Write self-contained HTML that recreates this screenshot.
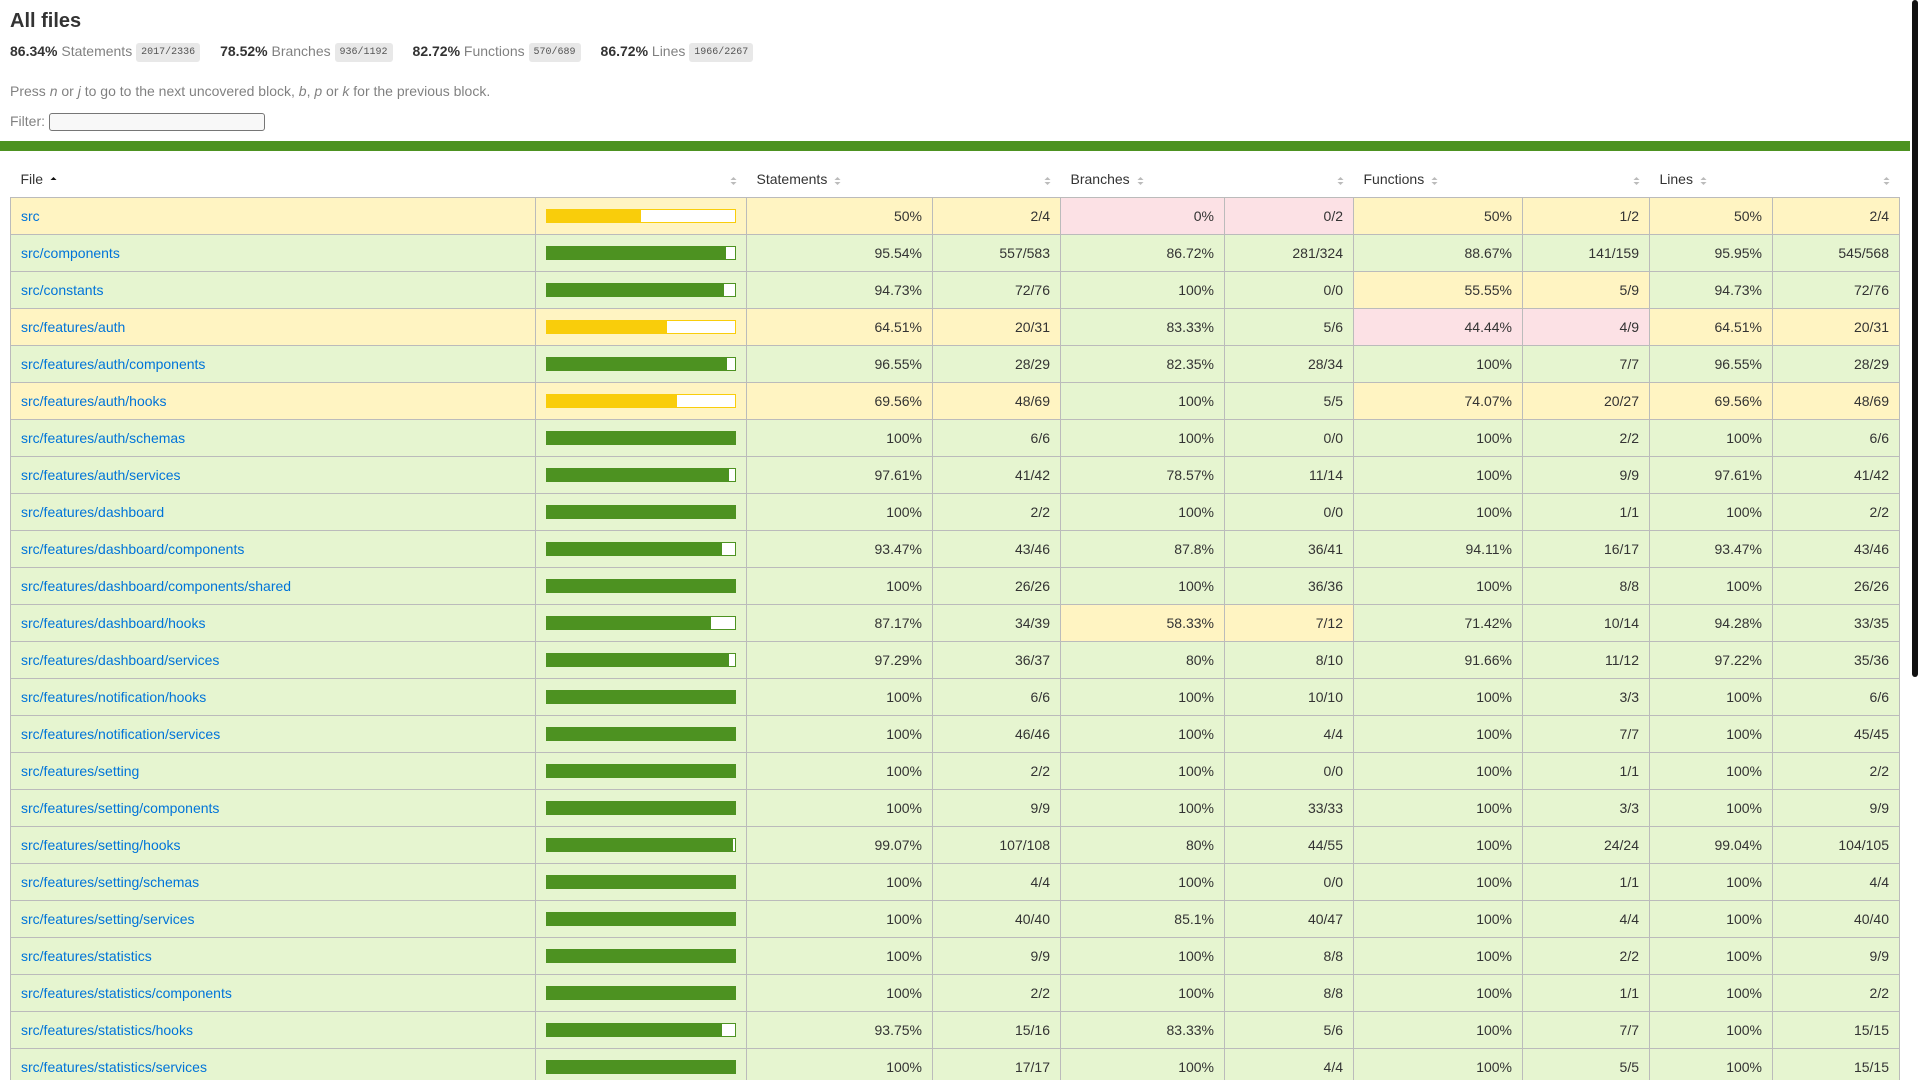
<!DOCTYPE html>
<html><head><meta charset="utf-8"><style>
html,body{margin:0;padding:0;overflow:hidden;height:1080px}
body{width:1910px;font-family:"Liberation Sans",Arial,sans-serif;font-size:14px;color:#333;background:#fff}
.pad1{padding:10px}
h1{font-size:20px;margin:0;line-height:23px}
.clearfix:after{content:"";display:table;clear:both}
.fl{float:left}
.pad1y{padding:10px 0}
.space-right2{padding-right:20px}
.strong{font-weight:bold}
.quiet{color:rgba(0,0,0,0.5)}
p{margin:14px 0;line-height:16px}
.fraction{font-family:"Liberation Mono",monospace;font-size:10px;color:#555;background:#E8E8E8;padding:4px 5px;border-radius:3px;vertical-align:middle}
input{width:216px;height:18px;border:1px solid #767676;border-radius:3px;padding:1px 2px;vertical-align:middle;background:#f8f8f8;margin:0}
.status-line{height:10px;background:rgb(77,146,33)}
table{border-collapse:collapse;width:1889px;table-layout:fixed}
tr{border-bottom:1px solid #bbb}
td,th{padding:10px;line-height:16px}
tbody{border:1px solid #bbb}
td{border-right:1px solid #bbb}
td:last-child{border-right:none}
th{text-align:left;font-weight:normal;white-space:nowrap}
th.pic,th.abs,td.pct,td.abs{text-align:right}
td.file{white-space:nowrap;overflow:hidden}
a{color:#0074D9;text-decoration:none}
.low{background:#FCE1E5}.medium{background:#fff4c2}.high{background:rgb(230,245,208)}
.chart{line-height:0;border:1px solid rgb(77,146,33);height:12px}
.medium .chart{border-color:#f9cd0b}
.high .cover-fill{background:rgb(77,146,33)}
.medium .cover-fill{background:#f9cd0b}
.cover-fill,.cover-empty{display:inline-block;height:12px;vertical-align:top}
.cover-empty{background:#fff}
.s{display:inline-block;width:7px;height:10px;margin-left:7px;vertical-align:middle}
.sb{position:absolute;right:2px;top:0;width:6px;height:677px;background:#111;border-radius:3px}
</style></head><body>
<div class="sb"></div>
<div class="pad1">
<h1>All files</h1>
<div class="clearfix">
<div class="fl pad1y space-right2"><span class="strong">86.34% </span><span class="quiet">Statements</span> <span class="fraction">2017/2336</span></div>
<div class="fl pad1y space-right2"><span class="strong">78.52% </span><span class="quiet">Branches</span> <span class="fraction">936/1192</span></div>
<div class="fl pad1y space-right2"><span class="strong">82.72% </span><span class="quiet">Functions</span> <span class="fraction">570/689</span></div>
<div class="fl pad1y space-right2"><span class="strong">86.72% </span><span class="quiet">Lines</span> <span class="fraction">1966/2267</span></div>
</div>
<p class="quiet">Press <em>n</em> or <em>j</em> to go to the next uncovered block, <em>b</em>, <em>p</em> or <em>k</em> for the previous block.</p>
<div class="quiet">Filter: <input type="search"></div>
</div>
<div class="status-line"></div>
<div class="pad1">
<table>
<colgroup><col style="width:525px"><col style="width:211px"><col style="width:186px"><col style="width:128px"><col style="width:164px"><col style="width:129px"><col style="width:169px"><col style="width:127px"><col style="width:123px"><col style="width:127px"></colgroup>
<thead><tr style="border:none">
<th>File<svg class="s" viewBox="0 0 7 10"><polygon points="0.5,4 6.5,4 3.5,1" fill="#111"/></svg></th>
<th class="pic"><svg class="s" viewBox="0 0 7 10"><polygon points="0.5,4 6.5,4 3.5,1" fill="#bbb"/><polygon points="0.5,6 6.5,6 3.5,9" fill="#bbb"/></svg></th>
<th>Statements<svg class="s" viewBox="0 0 7 10"><polygon points="0.5,4 6.5,4 3.5,1" fill="#bbb"/><polygon points="0.5,6 6.5,6 3.5,9" fill="#bbb"/></svg></th>
<th class="abs"><svg class="s" viewBox="0 0 7 10"><polygon points="0.5,4 6.5,4 3.5,1" fill="#bbb"/><polygon points="0.5,6 6.5,6 3.5,9" fill="#bbb"/></svg></th>
<th>Branches<svg class="s" viewBox="0 0 7 10"><polygon points="0.5,4 6.5,4 3.5,1" fill="#bbb"/><polygon points="0.5,6 6.5,6 3.5,9" fill="#bbb"/></svg></th>
<th class="abs"><svg class="s" viewBox="0 0 7 10"><polygon points="0.5,4 6.5,4 3.5,1" fill="#bbb"/><polygon points="0.5,6 6.5,6 3.5,9" fill="#bbb"/></svg></th>
<th>Functions<svg class="s" viewBox="0 0 7 10"><polygon points="0.5,4 6.5,4 3.5,1" fill="#bbb"/><polygon points="0.5,6 6.5,6 3.5,9" fill="#bbb"/></svg></th>
<th class="abs"><svg class="s" viewBox="0 0 7 10"><polygon points="0.5,4 6.5,4 3.5,1" fill="#bbb"/><polygon points="0.5,6 6.5,6 3.5,9" fill="#bbb"/></svg></th>
<th>Lines<svg class="s" viewBox="0 0 7 10"><polygon points="0.5,4 6.5,4 3.5,1" fill="#bbb"/><polygon points="0.5,6 6.5,6 3.5,9" fill="#bbb"/></svg></th>
<th class="abs"><svg class="s" viewBox="0 0 7 10"><polygon points="0.5,4 6.5,4 3.5,1" fill="#bbb"/><polygon points="0.5,6 6.5,6 3.5,9" fill="#bbb"/></svg></th>
</tr></thead>
<tbody>
<tr><td class="file medium"><a>src</a></td><td class="pic medium"><div class="chart"><div class="cover-fill" style="width:50%"></div><div class="cover-empty" style="width:50%"></div></div></td><td class="pct medium">50%</td><td class="abs medium">2/4</td><td class="pct low">0%</td><td class="abs low">0/2</td><td class="pct medium">50%</td><td class="abs medium">1/2</td><td class="pct medium">50%</td><td class="abs medium">2/4</td></tr>
<tr><td class="file high"><a>src/components</a></td><td class="pic high"><div class="chart"><div class="cover-fill" style="width:95%"></div><div class="cover-empty" style="width:5%"></div></div></td><td class="pct high">95.54%</td><td class="abs high">557/583</td><td class="pct high">86.72%</td><td class="abs high">281/324</td><td class="pct high">88.67%</td><td class="abs high">141/159</td><td class="pct high">95.95%</td><td class="abs high">545/568</td></tr>
<tr><td class="file high"><a>src/constants</a></td><td class="pic high"><div class="chart"><div class="cover-fill" style="width:94%"></div><div class="cover-empty" style="width:6%"></div></div></td><td class="pct high">94.73%</td><td class="abs high">72/76</td><td class="pct high">100%</td><td class="abs high">0/0</td><td class="pct medium">55.55%</td><td class="abs medium">5/9</td><td class="pct high">94.73%</td><td class="abs high">72/76</td></tr>
<tr><td class="file medium"><a>src/features/auth</a></td><td class="pic medium"><div class="chart"><div class="cover-fill" style="width:64%"></div><div class="cover-empty" style="width:36%"></div></div></td><td class="pct medium">64.51%</td><td class="abs medium">20/31</td><td class="pct high">83.33%</td><td class="abs high">5/6</td><td class="pct low">44.44%</td><td class="abs low">4/9</td><td class="pct medium">64.51%</td><td class="abs medium">20/31</td></tr>
<tr><td class="file high"><a>src/features/auth/components</a></td><td class="pic high"><div class="chart"><div class="cover-fill" style="width:96%"></div><div class="cover-empty" style="width:4%"></div></div></td><td class="pct high">96.55%</td><td class="abs high">28/29</td><td class="pct high">82.35%</td><td class="abs high">28/34</td><td class="pct high">100%</td><td class="abs high">7/7</td><td class="pct high">96.55%</td><td class="abs high">28/29</td></tr>
<tr><td class="file medium"><a>src/features/auth/hooks</a></td><td class="pic medium"><div class="chart"><div class="cover-fill" style="width:69%"></div><div class="cover-empty" style="width:31%"></div></div></td><td class="pct medium">69.56%</td><td class="abs medium">48/69</td><td class="pct high">100%</td><td class="abs high">5/5</td><td class="pct medium">74.07%</td><td class="abs medium">20/27</td><td class="pct medium">69.56%</td><td class="abs medium">48/69</td></tr>
<tr><td class="file high"><a>src/features/auth/schemas</a></td><td class="pic high"><div class="chart"><div class="cover-fill" style="width:100%"></div></div></td><td class="pct high">100%</td><td class="abs high">6/6</td><td class="pct high">100%</td><td class="abs high">0/0</td><td class="pct high">100%</td><td class="abs high">2/2</td><td class="pct high">100%</td><td class="abs high">6/6</td></tr>
<tr><td class="file high"><a>src/features/auth/services</a></td><td class="pic high"><div class="chart"><div class="cover-fill" style="width:97%"></div><div class="cover-empty" style="width:3%"></div></div></td><td class="pct high">97.61%</td><td class="abs high">41/42</td><td class="pct high">78.57%</td><td class="abs high">11/14</td><td class="pct high">100%</td><td class="abs high">9/9</td><td class="pct high">97.61%</td><td class="abs high">41/42</td></tr>
<tr><td class="file high"><a>src/features/dashboard</a></td><td class="pic high"><div class="chart"><div class="cover-fill" style="width:100%"></div></div></td><td class="pct high">100%</td><td class="abs high">2/2</td><td class="pct high">100%</td><td class="abs high">0/0</td><td class="pct high">100%</td><td class="abs high">1/1</td><td class="pct high">100%</td><td class="abs high">2/2</td></tr>
<tr><td class="file high"><a>src/features/dashboard/components</a></td><td class="pic high"><div class="chart"><div class="cover-fill" style="width:93%"></div><div class="cover-empty" style="width:7%"></div></div></td><td class="pct high">93.47%</td><td class="abs high">43/46</td><td class="pct high">87.8%</td><td class="abs high">36/41</td><td class="pct high">94.11%</td><td class="abs high">16/17</td><td class="pct high">93.47%</td><td class="abs high">43/46</td></tr>
<tr><td class="file high"><a>src/features/dashboard/components/shared</a></td><td class="pic high"><div class="chart"><div class="cover-fill" style="width:100%"></div></div></td><td class="pct high">100%</td><td class="abs high">26/26</td><td class="pct high">100%</td><td class="abs high">36/36</td><td class="pct high">100%</td><td class="abs high">8/8</td><td class="pct high">100%</td><td class="abs high">26/26</td></tr>
<tr><td class="file high"><a>src/features/dashboard/hooks</a></td><td class="pic high"><div class="chart"><div class="cover-fill" style="width:87%"></div><div class="cover-empty" style="width:13%"></div></div></td><td class="pct high">87.17%</td><td class="abs high">34/39</td><td class="pct medium">58.33%</td><td class="abs medium">7/12</td><td class="pct high">71.42%</td><td class="abs high">10/14</td><td class="pct high">94.28%</td><td class="abs high">33/35</td></tr>
<tr><td class="file high"><a>src/features/dashboard/services</a></td><td class="pic high"><div class="chart"><div class="cover-fill" style="width:97%"></div><div class="cover-empty" style="width:3%"></div></div></td><td class="pct high">97.29%</td><td class="abs high">36/37</td><td class="pct high">80%</td><td class="abs high">8/10</td><td class="pct high">91.66%</td><td class="abs high">11/12</td><td class="pct high">97.22%</td><td class="abs high">35/36</td></tr>
<tr><td class="file high"><a>src/features/notification/hooks</a></td><td class="pic high"><div class="chart"><div class="cover-fill" style="width:100%"></div></div></td><td class="pct high">100%</td><td class="abs high">6/6</td><td class="pct high">100%</td><td class="abs high">10/10</td><td class="pct high">100%</td><td class="abs high">3/3</td><td class="pct high">100%</td><td class="abs high">6/6</td></tr>
<tr><td class="file high"><a>src/features/notification/services</a></td><td class="pic high"><div class="chart"><div class="cover-fill" style="width:100%"></div></div></td><td class="pct high">100%</td><td class="abs high">46/46</td><td class="pct high">100%</td><td class="abs high">4/4</td><td class="pct high">100%</td><td class="abs high">7/7</td><td class="pct high">100%</td><td class="abs high">45/45</td></tr>
<tr><td class="file high"><a>src/features/setting</a></td><td class="pic high"><div class="chart"><div class="cover-fill" style="width:100%"></div></div></td><td class="pct high">100%</td><td class="abs high">2/2</td><td class="pct high">100%</td><td class="abs high">0/0</td><td class="pct high">100%</td><td class="abs high">1/1</td><td class="pct high">100%</td><td class="abs high">2/2</td></tr>
<tr><td class="file high"><a>src/features/setting/components</a></td><td class="pic high"><div class="chart"><div class="cover-fill" style="width:100%"></div></div></td><td class="pct high">100%</td><td class="abs high">9/9</td><td class="pct high">100%</td><td class="abs high">33/33</td><td class="pct high">100%</td><td class="abs high">3/3</td><td class="pct high">100%</td><td class="abs high">9/9</td></tr>
<tr><td class="file high"><a>src/features/setting/hooks</a></td><td class="pic high"><div class="chart"><div class="cover-fill" style="width:99%"></div><div class="cover-empty" style="width:1%"></div></div></td><td class="pct high">99.07%</td><td class="abs high">107/108</td><td class="pct high">80%</td><td class="abs high">44/55</td><td class="pct high">100%</td><td class="abs high">24/24</td><td class="pct high">99.04%</td><td class="abs high">104/105</td></tr>
<tr><td class="file high"><a>src/features/setting/schemas</a></td><td class="pic high"><div class="chart"><div class="cover-fill" style="width:100%"></div></div></td><td class="pct high">100%</td><td class="abs high">4/4</td><td class="pct high">100%</td><td class="abs high">0/0</td><td class="pct high">100%</td><td class="abs high">1/1</td><td class="pct high">100%</td><td class="abs high">4/4</td></tr>
<tr><td class="file high"><a>src/features/setting/services</a></td><td class="pic high"><div class="chart"><div class="cover-fill" style="width:100%"></div></div></td><td class="pct high">100%</td><td class="abs high">40/40</td><td class="pct high">85.1%</td><td class="abs high">40/47</td><td class="pct high">100%</td><td class="abs high">4/4</td><td class="pct high">100%</td><td class="abs high">40/40</td></tr>
<tr><td class="file high"><a>src/features/statistics</a></td><td class="pic high"><div class="chart"><div class="cover-fill" style="width:100%"></div></div></td><td class="pct high">100%</td><td class="abs high">9/9</td><td class="pct high">100%</td><td class="abs high">8/8</td><td class="pct high">100%</td><td class="abs high">2/2</td><td class="pct high">100%</td><td class="abs high">9/9</td></tr>
<tr><td class="file high"><a>src/features/statistics/components</a></td><td class="pic high"><div class="chart"><div class="cover-fill" style="width:100%"></div></div></td><td class="pct high">100%</td><td class="abs high">2/2</td><td class="pct high">100%</td><td class="abs high">8/8</td><td class="pct high">100%</td><td class="abs high">1/1</td><td class="pct high">100%</td><td class="abs high">2/2</td></tr>
<tr><td class="file high"><a>src/features/statistics/hooks</a></td><td class="pic high"><div class="chart"><div class="cover-fill" style="width:93%"></div><div class="cover-empty" style="width:7%"></div></div></td><td class="pct high">93.75%</td><td class="abs high">15/16</td><td class="pct high">83.33%</td><td class="abs high">5/6</td><td class="pct high">100%</td><td class="abs high">7/7</td><td class="pct high">100%</td><td class="abs high">15/15</td></tr>
<tr><td class="file high"><a>src/features/statistics/services</a></td><td class="pic high"><div class="chart"><div class="cover-fill" style="width:100%"></div></div></td><td class="pct high">100%</td><td class="abs high">17/17</td><td class="pct high">100%</td><td class="abs high">4/4</td><td class="pct high">100%</td><td class="abs high">5/5</td><td class="pct high">100%</td><td class="abs high">15/15</td></tr>
</tbody></table>
</div>
</body></html>
